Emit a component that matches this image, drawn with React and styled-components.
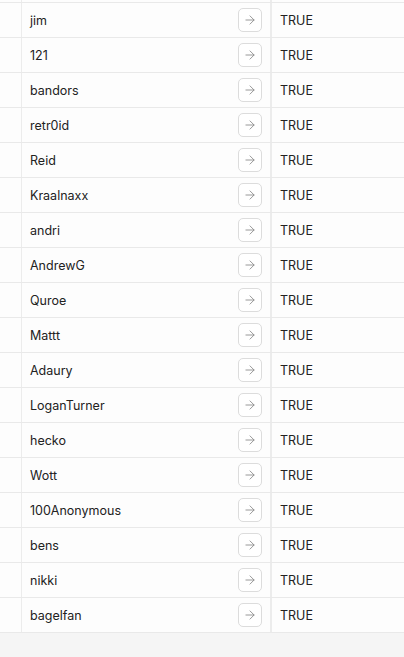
import React from 'react';
import styled, { createGlobalStyle } from 'styled-components';
import { ArrowRight } from 'lucide-react';

const names = [
  'jim', '121', 'bandors', 'retr0id', 'Reid', 'Kraalnaxx', 'andri', 'AndrewG',
  'Quroe', 'Mattt', 'Adaury', 'LoganTurner', 'hecko', 'Wott', '100Anonymous',
  'bens', 'nikki', 'bagelfan',
];

const GlobalStyle = createGlobalStyle`
  html, body {
    margin: 0;
    padding: 0;
    background: #f5f5f5;
    font-family: Inter, "Noto Sans", sans-serif;
    overflow: hidden;
  }
`;

const Page = styled.div`
  height: 100vh;
  overflow: hidden;
`;

const Table = styled.div`
  display: flex;
  flex-direction: column;
`;

/* bottom sliver of the row scrolled above the viewport */
const ClippedRow = styled.div`
  display: grid;
  grid-template-columns: 21px 1px 248px 2px 1fr;
  height: 2px;
  border-bottom: 1px solid #e9e9e9;
  background: #fdfdfd;
`;

const Row = styled(ClippedRow)`
  height: 34px;
`;

const Divider = styled.div`
  background: #ececec;
`;

const Cell = styled.div`
  display: flex;
  align-items: center;
  justify-content: space-between;
  padding: 0 8px;
  font-size: 12.5px;
  color: #222;
  min-width: 0;
`;

const ValueCell = styled(Cell)`
  padding-left: 8px;
`;

const LinkButton = styled.button`
  width: 24px;
  height: 24px;
  padding: 0;
  display: flex;
  align-items: center;
  justify-content: center;
  background: #fff;
  border: 1px solid #dcdcdc;
  border-radius: 5px;
  color: #8a8a8a;
`;

export default function App() {
  return (
    <Page>
      <GlobalStyle />
      <Table>
        <ClippedRow>
          <div />
          <Divider />
          <div />
          <Divider />
          <div />
        </ClippedRow>
        {names.map((name) => (
          <Row key={name}>
            <div />
            <Divider />
            <Cell>
              <span>{name}</span>
              <LinkButton>
                <ArrowRight size={14} strokeWidth={1.5} />
              </LinkButton>
            </Cell>
            <Divider />
            <ValueCell>TRUE</ValueCell>
          </Row>
        ))}
      </Table>
    </Page>
  );
}
